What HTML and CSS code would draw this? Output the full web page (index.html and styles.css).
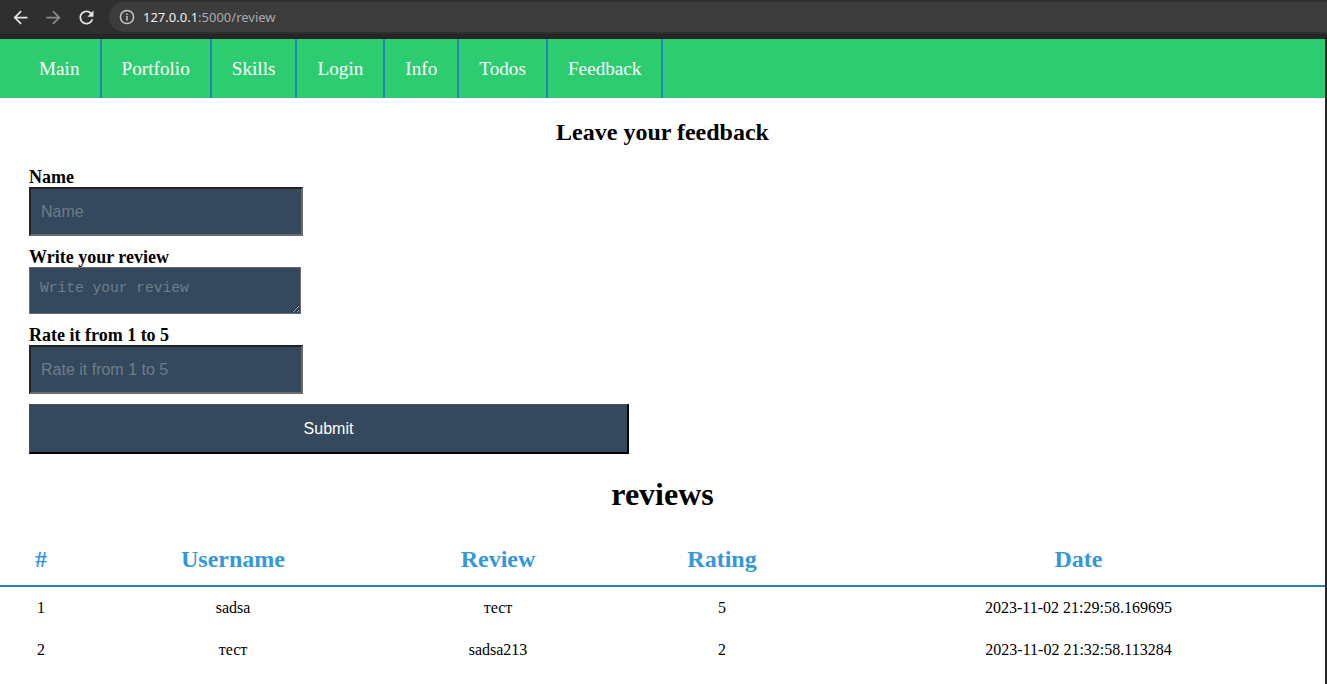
FILE: index.html
```html
<!DOCTYPE html>
<html lang="en">
<head>
<meta charset="utf-8">
<title>Review</title>
<link rel="stylesheet" href="styles.css">
</head>
<body>
<header class="chrome">
  <div class="chrome-buttons">
    <svg class="ic ic-back" viewBox="0 0 24 24"><path d="M20 11H7.83l5.59-5.59L12 4l-8 8 8 8 1.41-1.41L7.83 13H20v-2z"/></svg>
    <svg class="ic ic-fwd" viewBox="0 0 24 24"><path d="M12 4l-1.41 1.41L16.17 11H4v2h12.17l-5.58 5.59L12 20l8-8z"/></svg>
    <svg class="ic ic-reload" viewBox="0 0 24 24"><path d="M17.65 6.35C16.2 4.9 14.21 4 12 4c-4.42 0-7.99 3.58-7.99 8s3.57 8 7.99 8c3.73 0 6.84-2.55 7.73-6h-2.08c-.82 2.33-3.04 4-5.650 4-3.31 0-6-2.69-6-6s2.690-6 6-6c1.66 0 3.14.69 4.22 1.780L13 11h7V4l-2.35 2.35z"/></svg>
  </div>
  <div class="omnibox">
    <svg class="info" viewBox="0 0 16 16"><circle cx="8" cy="8" r="6.6" fill="none" stroke="#c4c7c5" stroke-width="1.5"/><rect x="7.25" y="7" width="1.5" height="4.5" fill="#c4c7c5"/><rect x="7.25" y="4.5" width="1.5" height="1.5" fill="#c4c7c5"/></svg>
    <span class="url"><span class="host">127.0.0.1</span>:5000/review</span>
  </div>
</header>
<div class="viewport">
  <nav class="topnav">
    <ul>
      <li><a href="#">Main</a></li>
      <li><a href="#">Portfolio</a></li>
      <li><a href="#">Skills</a></li>
      <li><a href="#">Login</a></li>
      <li><a href="#">Info</a></li>
      <li><a href="#">Todos</a></li>
      <li><a href="#">Feedback</a></li>
    </ul>
  </nav>
  <main>
    <h2 class="form-title">Leave your feedback</h2>
    <form class="feedback">
      <label for="name">Name</label>
      <input id="name" class="field" type="text" placeholder="Name">
      <label for="review" class="spaced">Write your review</label>
      <textarea id="review" class="area" placeholder="Write your review"></textarea>
      <label for="rating" class="spaced">Rate it from 1 to 5</label>
      <input id="rating" class="field" type="text" placeholder="Rate it from 1 to 5">
      <button type="button" class="submit">Submit</button>
    </form>
    <h1 class="reviews-title">reviews</h1>
    <table class="reviews">
      <thead>
        <tr><th class="c1">#</th><th class="c2">Username</th><th class="c3">Review</th><th class="c4">Rating</th><th class="c5">Date</th></tr>
      </thead>
      <tbody>
        <tr><td>1</td><td>sadsa</td><td>тест</td><td>5</td><td>2023-11-02 21:29:58.169695</td></tr>
        <tr><td>2</td><td>тест</td><td>sadsa213</td><td>2</td><td>2023-11-02 21:32:58.113284</td></tr>
      </tbody>
    </table>
  </main>
</div>
</body>
</html>
```
FILE: styles.css
```css
html, body {
  margin: 0;
  padding: 0;
  background: #ffffff;
  overflow: hidden;
}
body {
  font-family: "Liberation Serif", "Times New Roman", serif;
  color: #000;
}

/* browser chrome */
.chrome {
  height: 39px;
  background: #2f2f2f;
  display: flex;
  align-items: flex-start;
  box-sizing: border-box;
  border-bottom: 5px solid #262626;
}
.chrome-buttons {
  display: flex;
  align-items: center;
  height: 34px;
  padding-left: 10px;
  gap: 12px;
}
.ic { width: 21px; height: 21px; }
.ic-back { fill: #e3e3e3; }
.ic-fwd { fill: #8a8a8a; }
.ic-reload { fill: #e3e3e3; }
.omnibox {
  flex: 1;
  margin-left: 12px;
  margin-top: 2px;
  height: 30px;
  background: #3c3c3c;
  border-radius: 15px 0 0 15px;
  display: flex;
  align-items: center;
  padding-left: 10px;
  gap: 8px;
}
.info { width: 16px; height: 16px; }
.url {
  font-family: "Noto Sans", "Liberation Sans", sans-serif;
  font-size: 13px;
  color: #a8abad;
}
.host { color: #f1f1f1; }

.viewport {
  border-right: 2px solid #262626;
  height: 645px;
  box-sizing: border-box;
}

/* nav */
.topnav {
  background: #2ecc71;
  height: 59px;
  padding-left: 19px;
}
.topnav ul {
  list-style: none;
  margin: 0;
  padding: 0;
  display: flex;
  height: 100%;
}
.topnav li {
  display: flex;
  border-right: 2px solid #2980b9;
}
.topnav a {
  display: flex;
  align-items: center;
  padding: 1px 20px 0 20px;
  color: #ffffff;
  text-decoration: none;
  font-size: 19.2px;
}

/* form */
.form-title {
  margin: 20px 0 0;
  text-align: center;
  font-size: 24px;
  line-height: 28px;
}
.feedback {
  display: flex;
  flex-direction: column;
  align-items: flex-start;
  padding-left: 29px;
  margin-top: 22px;
}
.feedback label {
  font-weight: bold;
  font-size: 18px;
  line-height: 19px;
}
.feedback label.spaced { margin-top: 12px; }
.field {
  box-sizing: border-box;
  width: 274px;
  height: 49px;
  margin: 0;
  padding: 0 10px;
  background: #34495e;
  border: 2px solid;
  border-color: #222 #6b6b6b #6b6b6b #222;
  font-family: "Liberation Sans", Arial, sans-serif;
  font-size: 16px;
  color: #fff;
}
.field::placeholder { color: #6f7c88; }
.area {
  box-sizing: border-box;
  width: 272px;
  height: 47px;
  margin: 0;
  padding: 12px 10px 0;
  background: #34495e;
  border: 1px solid #6d6d6d;
  font-family: "Liberation Mono", "DejaVu Sans Mono", monospace;
  font-size: 14.6px;
  line-height: 17px;
  color: #fff;
}
.area::placeholder { color: #6f7c88; }
.submit {
  box-sizing: border-box;
  width: 600px;
  height: 50px;
  margin-top: 10px;
  background: #34495e;
  border-style: solid;
  border-color: #4f4f4f #000 #000 #4f4f4f;
  border-width: 1px 2px 2px 1px;
  color: #ffffff;
  font-family: "Liberation Sans", Arial, sans-serif;
  font-size: 16px;
}

/* reviews */
.reviews-title {
  margin: 22px 0 18px;
  text-align: center;
  font-size: 32px;
  line-height: 37px;
}
.reviews {
  width: 100%;
  border-collapse: collapse;
  table-layout: fixed;
}
.reviews th {
  color: #3498db;
  font-size: 24px;
  font-weight: bold;
  height: 52px;
  padding: 2px 0 0;
  vertical-align: middle;
  text-align: center;
  border-bottom: 2px solid #2980b9;
}
.reviews .c1 { width: 82px; }
.reviews .c2 { width: 302px; }
.reviews .c3 { width: 228px; }
.reviews .c4 { width: 220px; }
.reviews td {
  text-align: center;
  font-size: 16px;
  line-height: 18px;
  padding: 12px 0;
}
```
